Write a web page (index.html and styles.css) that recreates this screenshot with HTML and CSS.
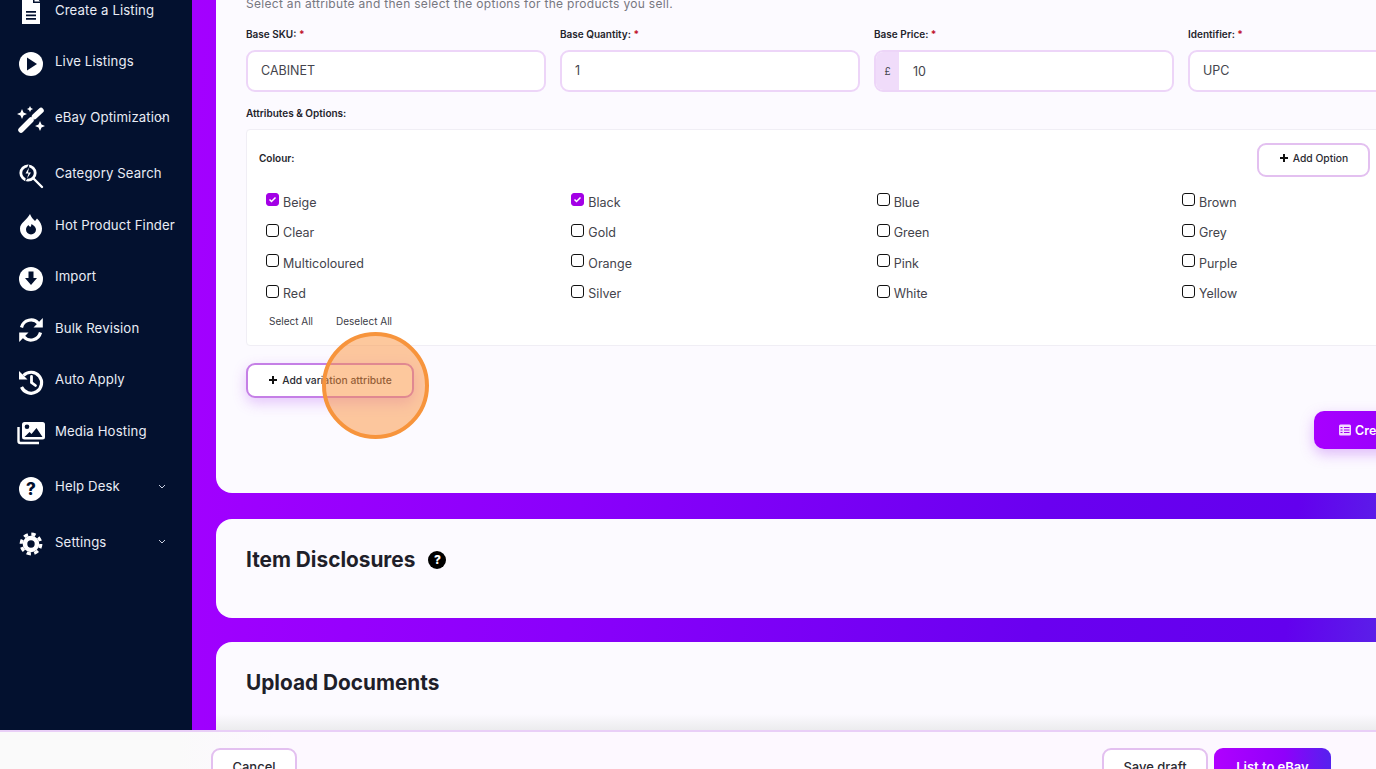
FILE: index.html
```html
<!DOCTYPE html>
<html lang="en">
<head>
<meta charset="utf-8">
<title>Create a Listing</title>
<link rel="stylesheet" href="styles.css">
</head>
<body>
<div class="app">
  <div class="top">
    <nav class="sidebar">
      <a class="nav-item"><svg class="ico" width="28" height="28" viewBox="0 0 28 28"><path fill="#fff" d="M5 -3h11v8h7v21H5z"/><path fill="#fff" d="M17.500 -3L23 3.500h-5.500z"/><path fill="#03112f" d="M9 13h10v1.700H9zM9 16.500h10v1.700H9zM9 20h10v1.700H9z"/></svg><span>Create a Listing</span></a>
      <a class="nav-item"><svg class="ico" width="28" height="28" viewBox="0 0 28 28"><circle cx="14" cy="14" r="12" fill="#fff"/><path fill="#03112f" d="M10 7.500L20 14l-10 6.500z"/></svg><span>Live Listings</span></a>
      <a class="nav-item spaced"><svg class="ico" width="28" height="28" viewBox="0 0 28 28"><path stroke="#fff" stroke-width="5.500" stroke-linecap="round" d="M4 24L14 14"/><path stroke="#fff" stroke-width="5.500" stroke-linecap="round" d="M17.500 10.500L24 4.500"/><path fill="#fff" d="M5 3l1.500 3.500L10 8 6.500 9.500 5 13 3.500 9.500 0 8l3.500-1.500zM13 0l1 2 2 1-2 1-1 2-1-2-2-1 2-1zM23 15l1.500 3.500L28 20l-3.500 1.500L23 25l-1.500-3.500L18 20l3.500-1.500z"/></svg><span>eBay Optimization</span><svg class="chev" width="8" height="5" viewBox="0 0 8 5"><path d="M1 1l3 3 3-3" fill="none" stroke="#c9cfe0" stroke-width="1"/></svg></a>
      <a class="nav-item"><svg class="ico" width="28" height="28" viewBox="0 0 28 28"><circle cx="11" cy="11" r="7.200" fill="none" stroke="#fff" stroke-width="2.800"/><path stroke="#fff" stroke-width="2.400" stroke-linecap="round" d="M16.500 16.500L25 25"/><path fill="#03112f" d="M12 2L6.500 12h3L8 20 15.500 9.500h-3z"/><path fill="#fff" d="M12 5.500L8.500 11.500h3L10 16.500 14 10.500h-3z"/></svg><span>Category Search</span></a>
      <a class="nav-item"><svg class="ico" width="28" height="28" viewBox="0 0 28 28"><path fill="#fff" d="M13 1c1 3 3 5 5 7l2-2.500c3 3 5 6.500 5 10a11 11 0 0 1-22 0C3 10 10 7 13 1z"/><path fill="#03112f" d="M14 21.500a5 5 0 0 1-5-5c0-2 1-3 2.500-4.500.5 1 1 1.500 2 2 .5-1 1-2 1-3 2.500 1.500 4.500 3.500 4.500 5.500a5 5 0 0 1-5 5z"/></svg><span>Hot Product Finder</span></a>
      <a class="nav-item"><svg class="ico" width="28" height="28" viewBox="0 0 28 28"><circle cx="14" cy="14" r="12" fill="#fff"/><path fill="#03112f" d="M11.500 6.500h5V13H20l-6 7-6-7h3.500z"/></svg><span>Import</span></a>
      <a class="nav-item"><svg class="ico" width="28" height="28" viewBox="0 0 28 28"><path fill="none" stroke="#fff" stroke-width="3.200" d="M4.500 11.500A9.800 9.800 0 0 1 21.500 7.500"/><path fill="#fff" d="M25.800 2v9.500h-9.300z"/><path fill="none" stroke="#fff" stroke-width="3.200" d="M23.500 16.500A9.800 9.800 0 0 1 6.500 20.500"/><path fill="#fff" d="M2.200 26v-9.500h9.300z"/></svg><span>Bulk Revision</span></a>
      <a class="nav-item"><svg class="ico" width="28" height="28" viewBox="0 0 28 28"><path fill="none" stroke="#fff" stroke-width="3.200" d="M6.500 7.500A10.500 10.500 0 1 1 4.500 19"/><path fill="#fff" d="M2 3v8.500h8.500z"/><path fill="none" stroke="#fff" stroke-width="2.800" stroke-linecap="round" d="M14.500 8.500V14.500l4 3"/></svg><span>Auto Apply</span></a>
      <a class="nav-item"><svg class="ico" width="28" height="28" viewBox="0 0 28 28"><path fill="none" stroke="#fff" stroke-width="2.400" d="M1.500 8v14a2 2 0 0 0 2 2H22"/><rect x="5" y="3" width="23" height="17.500" rx="2.500" fill="#fff"/><circle cx="10" cy="7.800" r="2.300" fill="#03112f"/><path fill="#03112f" d="M7.500 18l5-5 2 2 5-6 6 9z"/></svg><span>Media Hosting</span></a>
      <a class="nav-item lower"><svg class="ico" width="28" height="28" viewBox="0 0 28 28"><circle cx="14" cy="14" r="12" fill="#fff"/><text class="q" x="14" y="19.500">?</text></svg><span>Help Desk</span><svg class="chev" width="8" height="5" viewBox="0 0 8 5"><path d="M1 1l3 3 3-3" fill="none" stroke="#c9cfe0" stroke-width="1"/></svg></a>
      <a class="nav-item lower"><svg class="ico" width="28" height="28" viewBox="0 0 28 28"><circle cx="14" cy="14" r="9.800" fill="none" stroke="#fff" stroke-width="3.200" stroke-dasharray="4.300 3.400"/><circle cx="14" cy="14" r="6" fill="none" stroke="#fff" stroke-width="4.600"/></svg><span>Settings</span><svg class="chev" width="8" height="5" viewBox="0 0 8 5"><path d="M1 1l3 3 3-3" fill="none" stroke="#c9cfe0" stroke-width="1"/></svg></a>
    </nav>
    <main class="main">
      <section class="card card-variations">
        <p class="sub">Select an attribute and then select the options for the products you sell.</p>
        <div class="fields">
          <div class="field"><label class="label">Base SKU: <b>*</b></label><div class="input">CABINET</div></div>
          <div class="field"><label class="label">Base Quantity: <b>*</b></label><div class="input">1</div></div>
          <div class="field"><label class="label">Base Price: <b>*</b></label><div class="input input-price"><span class="prefix">£</span><span class="value">10</span></div></div>
          <div class="field"><label class="label">Identifier: <b>*</b></label><div class="input">UPC</div></div>
        </div>
        <div class="label attrs-label">Attributes &amp; Options:</div>
        <div class="attrs">
          <div class="attrs-head">
            <span class="label colour">Colour:</span>
            <button class="btn btn-option"><svg width="10" height="10" viewBox="0 0 10 10"><path d="M5 1v8M1 5h8" stroke="#111" stroke-width="2"/></svg>Add Option</button>
          </div>
          <div class="options">
            <div class="opt"><span class="check on"><svg width="9" height="9" viewBox="0 0 9 9"><path d="M1.500 4.500l2 2 4-4" fill="none" stroke="#fff" stroke-width="1.500"/></svg></span>Beige</div>
            <div class="opt"><span class="check on"><svg width="9" height="9" viewBox="0 0 9 9"><path d="M1.500 4.500l2 2 4-4" fill="none" stroke="#fff" stroke-width="1.500"/></svg></span>Black</div>
            <div class="opt"><span class="check"></span>Blue</div>
            <div class="opt"><span class="check"></span>Brown</div>
            <div class="opt"><span class="check"></span>Clear</div>
            <div class="opt"><span class="check"></span>Gold</div>
            <div class="opt"><span class="check"></span>Green</div>
            <div class="opt"><span class="check"></span>Grey</div>
            <div class="opt"><span class="check"></span>Multicoloured</div>
            <div class="opt"><span class="check"></span>Orange</div>
            <div class="opt"><span class="check"></span>Pink</div>
            <div class="opt"><span class="check"></span>Purple</div>
            <div class="opt"><span class="check"></span>Red</div>
            <div class="opt"><span class="check"></span>Silver</div>
            <div class="opt"><span class="check"></span>White</div>
            <div class="opt"><span class="check"></span>Yellow</div>
          </div>
          <div class="select-links"><a>Select All</a><a>Deselect All</a></div>
        </div>
        <button class="btn btn-variation"><svg width="10" height="10" viewBox="0 0 10 10"><path d="M5 1v8M1 5h8" stroke="#111" stroke-width="2"/></svg>Add variation attribute</button>
        <button class="btn btn-create"><svg width="12" height="12" viewBox="0 0 12 12"><rect width="12" height="11" y=".5" rx="1.500" fill="#f3d9ff"/><path d="M1.500 3.500h2M5 3.500h5.500M1.500 6h2M5 6h5.500M1.500 8.500h2M5 8.500h5.500" stroke="#a000f0" stroke-width="1"/></svg>Create Variations</button>
        <span class="spot"></span>
      </section>
      <section class="card card-disclosures">
        <h2 class="title">Item Disclosures <span class="help">?</span></h2>
      </section>
      <section class="card card-upload">
        <h2 class="title">Upload Documents</h2>
      </section>
    </main>
  </div>
  <footer class="footer">
    <button class="btn btn-foot btn-cancel">Cancel</button>
    <button class="btn btn-foot btn-save">Save draft</button>
    <button class="btn btn-foot btn-list">List to eBay</button>
  </footer>
</div>
</body>
</html>
```

FILE: styles.css
```css
* { box-sizing: border-box; }
html, body { margin: 0; height: 100%; overflow: hidden; }
body { font-family: Inter, "Open Sans", "Liberation Sans", sans-serif; color: #2b2b33; background: #fff; }
.app { height: 769px; display: flex; flex-direction: column; }
.top { height: 730px; display: flex; overflow: hidden; }

.sidebar { width: 192px; flex: none; background: #03112f; padding: 0 0 0 17px; display: flex; flex-direction: column; }
.nav-item { position: relative; height: 51.5px; flex: none; display: flex; align-items: center; gap: 10px; color: #e9ecf5; font-size: 13.2px; letter-spacing: .12px; white-space: nowrap; }
.nav-item span { margin-top: -1px; }
.nav-item:first-child { margin-top: -15.75px; }
.nav-item.spaced { margin: 4.5px 0; }
.nav-item.lower { margin-top: 4px; }
.ico { flex: none; margin-top: 4px; overflow: visible; }
.q { font: 800 17px Inter, sans-serif; fill: #03112f; text-anchor: middle; }
.chev { position: absolute; left: 141px; top: 23px; }

.main { flex: 1; min-width: 0; position: relative; overflow: hidden; padding-left: 24px; background: linear-gradient(96deg, #a400ff 0%, #8a00fb 35%, #6a00f0 72%, #6300ee 92%, #5a22e8 100%); }
.card { width: 1500px; background: #fcfaff; border-radius: 16px; padding: 25px 30px 0; position: relative; }
.card-variations { margin-top: -30px; height: 523px; }
.card-disclosures { margin-top: 26px; height: 99px; }
.card-upload { margin-top: 24px; height: 200px; background: linear-gradient(#fcfaff 72px, #ececee 88px); }

.sub { margin: 0; font-size: 12px; letter-spacing: .3px; line-height: 18px; color: #77777f; white-space: nowrap; }
.fields { display: grid; grid-template-columns: repeat(4, 300px); gap: 14px; margin-top: 14px; }
.label { font-size: 10px; line-height: 14px; font-weight: 600; color: #24242c; display: block; }
.label b { color: #c0122c; font-weight: 700; }
.input { height: 42px; margin-top: 9px; border: 2px solid #edd5f8; border-radius: 9px; background: #fff; display: flex; align-items: center; padding: 0 0 1px 13px; font-size: 12.5px; color: #44444c; overflow: hidden; }
.input-price { padding: 0; }
.prefix { width: 23px; height: 100%; background: #f0dcfa; display: flex; align-items: center; justify-content: center; font-size: 10px; }
.value { margin-left: 14px; }
.attrs-label { margin-top: 14px; }
.attrs { width: 1242px; margin-top: 9px; height: 217px; border: 1px solid #f0eef5; background: #fff; border-radius: 4px; padding: 13px 0 0 12px; }
.attrs-head { display: flex; align-items: center; justify-content: space-between; padding-right: 117px; }
.colour { margin-top: -5px; }
.options { display: grid; grid-template-columns: repeat(4, 305.33px); grid-auto-rows: 30.5px; margin: 11px 0 0 7px; }
.opt { display: flex; align-items: center; font-size: 12.5px; color: #44444c; gap: 4px; padding-bottom: 2px; }
.check { width: 13px; height: 13px; margin-top: -5px; border: 1.4px solid #111; border-radius: 3px; background: #fff; display: flex; align-items: center; justify-content: center; }
.check.on { background: #a300e6; border-color: #a300e6; }
.select-links { display: flex; gap: 23px; margin: 4px 0 0 10px; font-size: 10px; line-height: 14px; color: #3c3c46; }

.btn { font-family: inherit; display: flex; align-items: center; justify-content: center; gap: 4px; background: #fff; border: 2px solid #e3c0f0; border-radius: 9px; color: #2b2b33; cursor: pointer; padding: 0; }
.btn-option { width: 113px; height: 34px; font-size: 10.3px; font-weight: 500; padding-bottom: 5px; }
.btn-variation { width: 168px; height: 35px; margin-top: 17px; font-size: 10.3px; font-weight: 500; padding-bottom: 2px; border-color: #c57fe6; box-shadow: 0 5px 14px rgba(170, 60, 240, .28); }
.btn-create { width: 150px; height: 38px; margin: 13px 0 0 1068px; border: 0; border-radius: 10px; justify-content: flex-start; padding-left: 25px; background: linear-gradient(90deg, #a800ff, #8a00fa); color: #fff; font-size: 12.5px; font-weight: 600; box-shadow: 0 5px 14px rgba(170, 60, 240, .35); }
.spot { position: absolute; left: 106px; top: 362px; width: 107px; height: 107px; border-radius: 50%; background: rgba(251, 146, 60, .5); border: 4px solid #f7943c; }

.title { margin: 0; padding-top: 1px; font-size: 20.8px; line-height: 30px; font-weight: 700; color: #1f1f2a; display: flex; align-items: center; gap: 13px; }
.help { width: 18px; height: 18px; border-radius: 50%; background: #000; color: #fff; font-size: 12px; font-weight: 800; display: flex; align-items: center; justify-content: center; }

.footer { height: 39px; flex: none; overflow: hidden; border-top: 2px solid #e9cff7; background: linear-gradient(90deg, #fafafa 0%, #fafafa 13%, #fdf8ff 20%, #fdf8ff 100%); padding: 16px 45px 0 211px; display: flex; align-items: flex-start; gap: 6px; }
.btn-foot { height: 38px; font-size: 13px; font-weight: 500; }
.btn-cancel { width: 86px; margin-right: auto; }
.btn-save { width: 106px; }
.btn-list { width: 117px; border: 0; background: linear-gradient(90deg, #b000ff, #9000fb 60%, #5522ee); color: #fff; font-weight: 600; }
```
